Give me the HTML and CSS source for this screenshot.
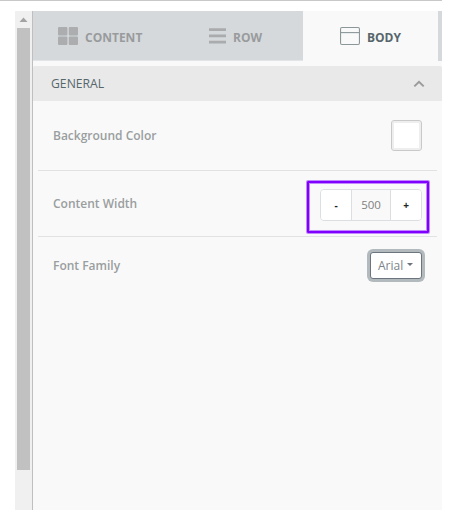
FILE: index.html
```html
<!DOCTYPE html>
<html lang="en">
<head>
<meta charset="utf-8">
<title>Body settings</title>
<link rel="stylesheet" href="styles.css">
</head>
<body>
<div class="topline"></div>
<main class="editor">
  <div class="scrollbar">
    <svg class="scroll-arrow" width="17" height="17" viewBox="0 0 17 17"><path d="M4.5 11 8.5 6.5 12.5 11z" fill="#a3a3a3"/></svg>
    <div class="thumb"></div>
  </div>
  <section class="panel">
    <nav class="tabs">
      <a class="tab tab-content">
        <svg width="20" height="18" viewBox="0 0 20 18" fill="#abadae"><rect width="9.4" height="8.4" rx="1"/><rect x="10.8" width="9.2" height="8.4" rx="1"/><rect y="9.6" width="9.4" height="8.4" rx="1"/><rect x="10.8" y="9.6" width="9.2" height="8.4" rx="1"/></svg>
        <span>CONTENT</span>
      </a>
      <a class="tab tab-row">
        <svg width="17" height="18" viewBox="0 0 17 18" fill="#a9abac"><path d="M0 1.3h17v2.7H0zM0 7.5h17v2.7H0zM0 13.7h17v2.7H0z"/></svg>
        <span>ROW</span>
      </a>
      <a class="tab tab-body">
        <svg width="20" height="18" viewBox="0 0 20 18" fill="none" stroke="#8b9699" stroke-width="1.1"><rect x=".55" y=".55" width="18.9" height="16.9" rx="1.4"/><path d="M.5 5.6h19"/></svg>
        <span>BODY</span>
      </a>
    </nav>
    <header class="section-head">
      <h2>GENERAL</h2>
      <svg width="12" height="8" viewBox="0 0 12 8" fill="none" stroke="#9b9b9b" stroke-width="2"><path d="M1.3 6.4 6 1.8 10.7 6.4"/></svg>
    </header>
    <div class="settings">
      <div class="setting color-row">
        <label>Background Color</label>
        <button class="swatch" aria-label="White"></button>
      </div>
      <div class="setting width-row">
        <label>Content Width</label>
        <div class="highlight">
          <div class="stepper"><button>-</button><output>500</output><button>+</button></div>
        </div>
      </div>
      <div class="setting font-row">
        <label>Font Family</label>
        <button class="select">Arial<i class="caret"></i></button>
      </div>
    </div>
  </section>
</main>
</body>
</html>
```
FILE: styles.css
```css
* { box-sizing: border-box; }
body {
  margin: 0;
  height: 510px;
  overflow: hidden;
  background: #fff;
  font-family: "Open Sans", sans-serif;
}
button { margin: 0; padding: 0; font-family: inherit; }
.topline { width: 442px; height: 1px; background: #c8c8c8; }
.editor { display: flex; width: 427px; height: 499px; margin: 10px 0 0 15px; }
.scrollbar { width: 17px; background: #f0f0f0; }
.scroll-arrow { display: block; }
.thumb { width: 13px; height: 442px; margin-left: 2px; background: #c1c1c1; }
.panel { width: 410px; background: #f9f9f9; border-left: 1px solid #bfbfbf; }
.tabs {
  display: flex;
  height: 50px;
  background: #d5d9dc;
}
.tab {
  display: flex;
  align-items: center;
  width: 135px;
  height: 50px;
  color: #999b9c;
  font-size: 12px;
  font-weight: 700;
  border-bottom: 1px solid #e2e6e9;
}
.tab span { padding-top: 3px; }
.tab-content { padding-left: 25px; gap: 7px; }
.tab-row { padding-left: 41px; gap: 7px; }
.tab-body { padding-left: 37px; gap: 7px; background: #f9f9f9; border-color: #f9f9f9; color: #56666b; }
.section-head {
  display: flex;
  align-items: center;
  justify-content: space-between;
  height: 35px;
  margin-top: 5px;
  padding: 0 17px 0 18px;
  background: #e9e9e9;
  border-radius: 2px 2px 0 0;
}
.section-head h2 { margin: 0; color: #56666b; font-size: 12.2px; font-weight: 400; }
.settings { padding: 0 5px; }
.setting {
  display: flex;
  align-items: center;
  justify-content: space-between;
  padding-left: 15px;
  padding-right: 15px;
  border-bottom: 1px solid #e0e2e4;
}
.setting label { color: #999e9f; font-size: 12px; font-weight: 600; }
.color-row { height: 70px; }
.width-row { height: 66px; padding-right: 8px; }
.font-row { height: 57px; border-bottom: 0; }
.swatch {
  width: 31px;
  height: 31px;
  border: 1px solid #c9c9c9;
  border-radius: 3px;
  background: #fff;
  box-shadow: inset 0 0 0 2px #eee;
}
.highlight {
  width: 122px;
  height: 52px;
  margin-top: 7px;
  padding: 6px 5px 10px 11px;
  border: 2px solid #7f00ff;
  border-radius: 1px;
  box-shadow: 0 0 0 1px rgba(127, 0, 255, .45), inset 0 0 0 1px rgba(127, 0, 255, .45);
}
.stepper {
  display: flex;
  width: 102px;
  height: 32px;
  border: 1px solid #dcdfe1;
  border-radius: 4px;
  overflow: hidden;
}
.stepper button { width: 30px; border: 0; background: #fff; color: #222; font-size: 10px; font-weight: 700; }
.stepper output {
  width: 40px;
  border: solid #dcdfe1;
  border-width: 0 1px;
  color: #808080;
  font-size: 11.5px;
  line-height: 30px;
  text-align: center;
}
.select {
  display: flex;
  align-items: center;
  width: 52px;
  height: 27px;
  padding-left: 7px;
  border: 1px solid #6c757d;
  border-radius: 3px;
  background: #fff;
  box-shadow: 0 0 0 3px #b3babd;
  color: #7b8489;
  font-size: 12px;
}
.caret { margin: -3px 0 0 4px; border: solid transparent; border-width: 3px 3px 0; border-top-color: #6c757d; }
```
